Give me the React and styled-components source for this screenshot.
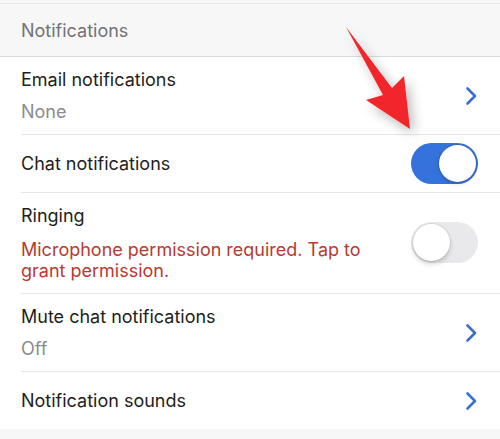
import React from "react";
import styled, { createGlobalStyle } from "styled-components";

const Global = createGlobalStyle`
  html, body { margin: 0; padding: 0; }
  body {
    background: #f7f7f7;
    font-family: Inter, "Liberation Sans", Arial, sans-serif;
    -webkit-font-smoothing: antialiased;
  }
`;

const Page = styled.div`
  position: relative;
  width: 500px;
  height: 439px;
  overflow: hidden;
  background: #f7f7f7;
  padding-top: 3px;
  box-sizing: border-box;
`;

const Header = styled.div`
  height: 52px;
  border-top: 1px solid #e6e6e6;
  border-bottom: 1px solid #dadada;
  display: flex;
  align-items: center;
  padding-left: 21px;
  font-size: 18px;
  color: #727276;
`;

const List = styled.div`
  background: #ffffff;
  padding-left: 21px;
`;

const Row = styled.div`
  display: flex;
  align-items: center;
  gap: 40px;
  min-height: ${(p) => p.$h}px;
  padding: ${(p) => p.$pad || "0"};
  padding-right: 22px;
  box-sizing: border-box;
  border-bottom: ${(p) => (p.$last ? "none" : "1px solid #e7e7e7")};
`;

const Texts = styled.div`
  flex: 1;
  display: flex;
  flex-direction: column;
  gap: ${(p) => p.$gap || 0}px;
`;

const Title = styled.div`
  font-size: 18px;
  line-height: 24px;
  color: #1e1e20;
`;

const Sub = styled.div`
  font-size: 18px;
  line-height: 24px;
  color: #8b8b8f;
`;

const Warn = styled.div`
  font-size: 18px;
  line-height: 21px;
  color: #b93a30;
`;

const Track = styled.div`
  position: relative;
  flex: none;
  width: 67px;
  height: 41px;
  border-radius: 21px;
  background: ${(p) => (p.$on ? "#3572db" : "#e9e9eb")};
`;

const Knob = styled.div`
  position: absolute;
  top: 2px;
  left: ${(p) => (p.$on ? "28px" : "2px")};
  width: 37px;
  height: 37px;
  border-radius: 50%;
  background: #ffffff;
  box-shadow: ${(p) =>
    p.$on
      ? "0 0 0 1px rgba(0,0,0,0.08), 0 2px 4px rgba(0,0,0,0.15)"
      : "0 0 0 1px rgba(0,0,0,0.06), 0 3px 5px rgba(0,0,0,0.18)"};
`;

const Toggle = ({ on }) => (
  <Track $on={on}>
    <Knob $on={on} />
  </Track>
);

const Chevron = () => (
  <svg width="13" height="20" viewBox="0 0 13 20" style={{ flex: "none" }}>
    <polyline
      points="2.5,2.5 10,10 2.5,17.5"
      fill="none"
      stroke="#3b6fce"
      strokeWidth="2.6"
      strokeLinecap="round"
      strokeLinejoin="round"
    />
  </svg>
);

const ArrowLayer = styled.svg`
  position: absolute;
  left: 0;
  top: 0;
  pointer-events: none;
`;

const Arrow = () => (
  <ArrowLayer width="500" height="439" viewBox="0 0 500 439">
    <defs>
      <filter id="sh" x="-50%" y="-50%" width="200%" height="200%">
        <feDropShadow dx="4" dy="5" stdDeviation="6" floodColor="#000" floodOpacity="0.28" />
      </filter>
    </defs>
    <polygon
      points="346,27 392,88 404,76 410,129 366,100 383,95"
      fill="#f2282c"
      filter="url(#sh)"
      strokeLinejoin="round"
    />
  </ArrowLayer>
);

export default function App() {
  return (
    <>
      <Global />
      <Page>
        <Header>Notifications</Header>
        <List>
          <Row $h={78} $pad="11px 0 10px 0">
            <Texts $gap={8}>
              <Title>Email notifications</Title>
              <Sub>None</Sub>
            </Texts>
            <Chevron />
          </Row>
          <Row $h={58}>
            <Texts>
              <Title>Chat notifications</Title>
            </Texts>
            <Toggle on />
          </Row>
          <Row $h={101} $pad="11px 0 12px 0">
            <Texts $gap={11}>
              <Title>Ringing</Title>
              <Warn>Microphone permission required. Tap to grant permission.</Warn>
            </Texts>
            <Toggle />
          </Row>
          <Row $h={78} $pad="11px 0 10px 0">
            <Texts $gap={8}>
              <Title>Mute chat notifications</Title>
              <Sub>Off</Sub>
            </Texts>
            <Chevron />
          </Row>
          <Row $h={57} $last>
            <Texts>
              <Title>Notification sounds</Title>
            </Texts>
            <Chevron />
          </Row>
        </List>
        <Arrow />
      </Page>
    </>
  );
}
